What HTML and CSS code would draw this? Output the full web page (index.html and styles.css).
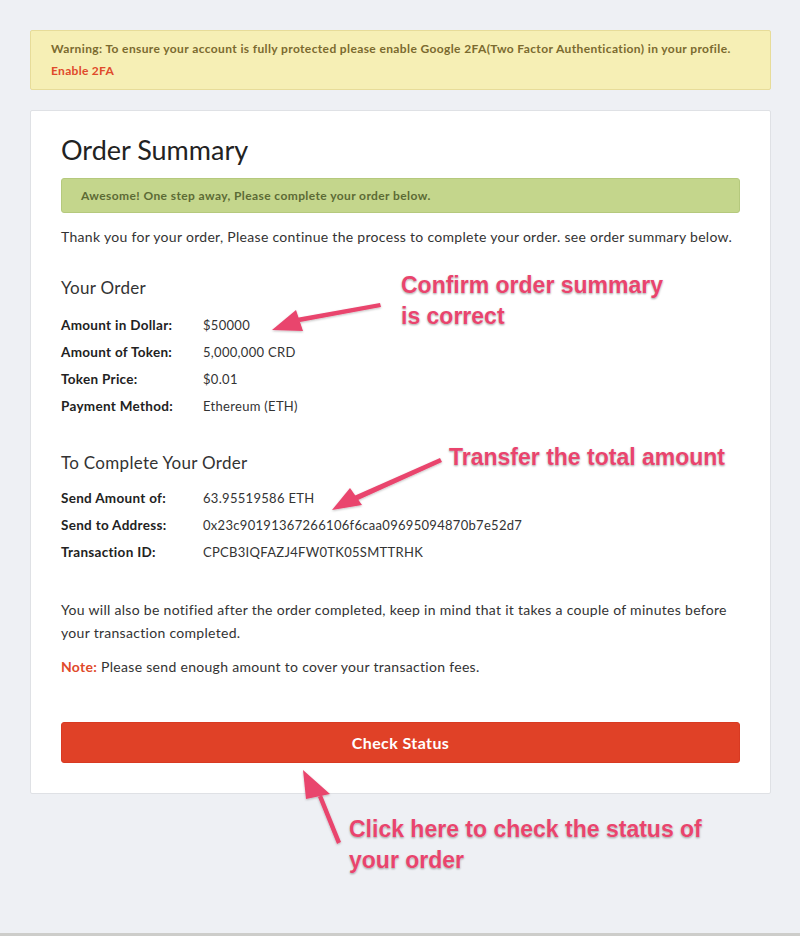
FILE: index.html
```html
<!DOCTYPE html>
<html>
<head>
<meta charset="utf-8">
<link rel="stylesheet" href="styles.css">
</head>
<body>
<div class="page">
  <div class="warning">
    <p class="warn-text">Warning: To ensure your account is fully protected please enable Google 2FA(Two Factor Authentication) in your profile.</p>
    <a class="warn-link">Enable 2FA</a>
  </div>

  <div class="card">
    <h1 class="title">Order Summary</h1>
    <div class="success">Awesome! One step away, Please complete your order below.</div>
    <p class="intro">Thank you for your order, Please continue the process to complete your order. see order summary below.</p>

    <h2 class="section">Your Order</h2>
    <div class="rows">
      <div class="row"><span class="label">Amount in Dollar:</span><span class="value">$50000</span></div>
      <div class="row"><span class="label">Amount of Token:</span><span class="value">5,000,000 CRD</span></div>
      <div class="row"><span class="label">Token Price:</span><span class="value">$0.01</span></div>
      <div class="row"><span class="label">Payment Method:</span><span class="value">Ethereum (ETH)</span></div>
    </div>

    <h2 class="section section2">To Complete Your Order</h2>
    <div class="rows rows2">
      <div class="row"><span class="label">Send Amount of:</span><span class="value">63.95519586 ETH</span></div>
      <div class="row"><span class="label">Send to Address:</span><span class="value">0x23c90191367266106f6caa09695094870b7e52d7</span></div>
      <div class="row"><span class="label">Transaction ID:</span><span class="value">CPCB3IQFAZJ4FW0TK05SMTTRHK</span></div>
    </div>

    <p class="notice">You will also be notified after the order completed, keep in mind that it takes a couple of minutes before your transaction completed.</p>
    <p class="note"><span class="note-label">Note:</span> Please send enough amount to cover your transaction fees.</p>

    <button class="btn">Check Status</button>
  </div>

  <div class="annot annot1">Confirm order summary<br>is correct</div>
  <div class="annot annot2">Transfer the total amount</div>
  <div class="annot annot3">Click here to check the status of<br>your order</div>

  <svg class="arrows" width="800" height="936" viewBox="0 0 800 936">
    <defs>
      <filter id="sh" x="-20%" y="-20%" width="140%" height="140%">
        <feDropShadow dx="0" dy="1" stdDeviation="1" flood-color="#000" flood-opacity="0.25"/>
      </filter>
    </defs>
    <g fill="#e9446d" filter="url(#sh)">
      <polygon points="380,303 381,307 300,322 296,318"/>
      <polygon points="272,330 296,310 303,331"/>
      <polygon points="440,458 442,462 358,500 354,496"/>
      <polygon points="332,510 350,488 362,505"/>
      <polygon points="337,844 341,842 322,795 318,797"/>
      <polygon points="303,770 330,794 306,799"/>
    </g>
  </svg>
</div>
</body>
</html>
```

FILE: styles.css
```css
* { box-sizing: border-box; }
html, body { margin: 0; padding: 0; }
body {
  background: #eef0f4;
  font-family: Lato, "Open Sans", sans-serif;
  color: #333;
  letter-spacing: 0.3px;
}
.page {
  position: relative;
  width: 800px;
  height: 936px;
  padding: 30px 29px 0 30px;
  border-bottom: 3px solid #cdcdca;
  overflow: hidden;
}
.warning {
  background: #f6efb5;
  border: 1px solid #e7dc99;
  border-radius: 2px;
  padding: 10px 20px 10px 20px;
  height: 60px;
}
.warn-text {
  margin: 0;
  font-size: 12px;
  font-weight: 700;
  color: #7b6a2f;
  line-height: 16px;
  letter-spacing: 0.38px;
  white-space: nowrap;
}
.warn-link {
  display: block;
  margin-top: 6px;
  font-size: 12px;
  font-weight: 700;
  color: #e04a2b;
  line-height: 16px;
}
.card {
  margin-top: 20px;
  background: #fff;
  border: 1px solid #dfe1e5;
  border-radius: 2px;
  padding: 21px 30px 30px 30px;
  height: 684px;
}
.title {
  margin: 0;
  font-size: 27px;
  font-weight: 400;
  color: #222;
  line-height: 36px;
  letter-spacing: 0;
}
.success {
  margin-top: 10px;
  background: #c4d68c;
  border: 1px solid #b5c97d;
  border-radius: 3px;
  height: 35px;
  padding: 0 19px;
  line-height: 33px;
  font-size: 12px;
  font-weight: 700;
  color: #5c6b35;
  letter-spacing: 0.4px;
}
.intro {
  margin: 14px 0 0 0;
  font-size: 14px;
  line-height: 20px;
  color: #333;
}
.section {
  margin: 30px 0 0 0;
  font-size: 17px;
  font-weight: 400;
  line-height: 22px;
  color: #333;
}
.section2 { margin-top: 37px; }
.rows {
  margin-top: 17px;
  display: flex;
  flex-direction: column;
  gap: 9px;
}
.rows2 { margin-top: 15px; }
.row {
  display: flex;
  font-size: 13px;
  line-height: 18px;
}
.label {
  width: 142px;
  font-weight: 700;
  font-size: 13.5px;
  color: #222;
  flex: none;
}
.value { color: #333; }
.notice {
  margin: 37px 0 0 0;
  font-size: 14px;
  line-height: 23px;
}
.note {
  margin: 13px 0 0 0;
  font-size: 14px;
  line-height: 20px;
}
.note-label { color: #e04a2b; font-weight: 700; }
.btn {
  display: block;
  width: 100%;
  margin-top: 45px;
  height: 41px;
  background: #e04127;
  border: 1px solid #d83a22;
  border-radius: 3px;
  color: #fff;
  font-family: Lato, "Open Sans", sans-serif;
  font-size: 16px;
  font-weight: 700;
  letter-spacing: 0.4px;
  padding: 0;
}
.annot {
  position: absolute;
  font-family: "Liberation Sans", Arial, sans-serif;
  font-weight: 700;
  font-size: 23px;
  line-height: 31px;
  color: #e9446d;
  letter-spacing: 0;
  text-shadow: 0 0 2px #fff, 0 1px 2px rgba(0,0,0,0.45);
  white-space: nowrap;
}
.annot1 { left: 401px; top: 270px; }
.annot2 { left: 449px; top: 442px; }
.annot3 { left: 349px; top: 814px; }
.arrows {
  position: absolute;
  left: 0;
  top: 0;
  pointer-events: none;
}
```
